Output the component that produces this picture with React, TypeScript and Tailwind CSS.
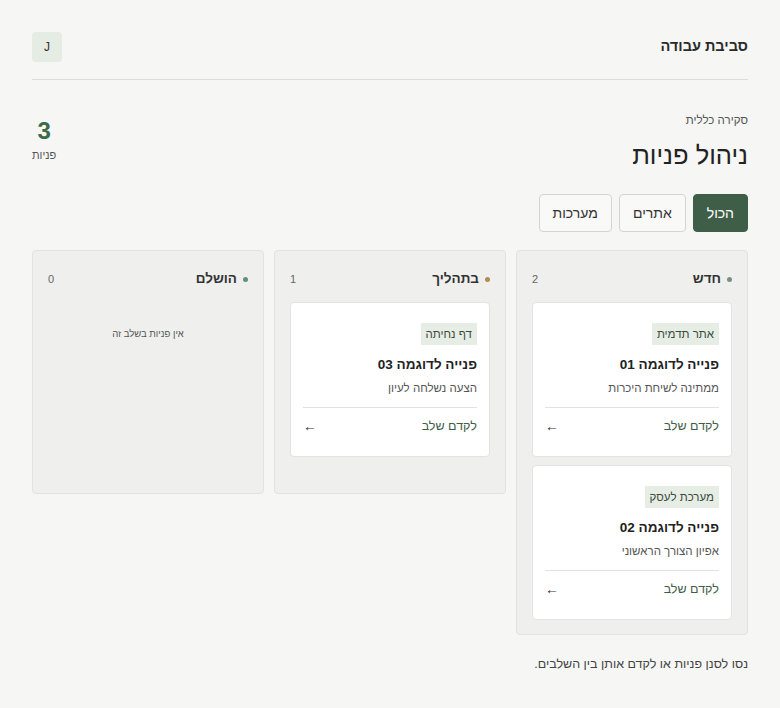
import React from 'react';

type Lead = { tag: string; title: string; note: string };
type Stage = { name: string; dot: string; leads: Lead[] };

const stages: Stage[] = [
  {
    name: 'חדש',
    dot: 'bg-[#7d8f81]',
    leads: [
      { tag: 'אתר תדמית', title: 'פנייה לדוגמה 01', note: 'ממתינה לשיחת היכרות' },
      { tag: 'מערכת לעסק', title: 'פנייה לדוגמה 02', note: 'אפיון הצורך הראשוני' },
    ],
  },
  {
    name: 'בתהליך',
    dot: 'bg-[#b38a52]',
    leads: [{ tag: 'דף נחיתה', title: 'פנייה לדוגמה 03', note: 'הצעה נשלחה לעיון' }],
  },
  { name: 'הושלם', dot: 'bg-[#5f9274]', leads: [] },
];

function LeadCard({ lead }: { lead: Lead }) {
  return (
    <div className="rounded-[4px] border border-[#e3e3df] bg-white px-[12px] pt-[20px] pb-[20px]">
      <div className="flex">
        <span className="h-[22px] bg-[#e6ede4] px-[5px] text-[11.5px] leading-[22px] text-[#3d4a40]">{lead.tag}</span>
      </div>
      <div className="mt-[10px] text-[13.5px] font-bold leading-[20px] text-[#222]">{lead.title}</div>
      <div className="mt-[4px] text-[11.5px] leading-[18px] text-[#555]">{lead.note}</div>
      <div className="mt-[10px] flex items-center justify-between border-t border-[#e2e2de] pt-[8px] text-[12.5px] leading-[20px]">
        <span className="text-[#3f5e48]">לקדם שלב</span>
        <span className="text-[14px] text-[#333]">←</span>
      </div>
    </div>
  );
}

export default function App() {
  return (
    <div
      dir="rtl"
      className="min-h-screen bg-[#f6f6f4] px-8 pt-8 pb-8 font-['Liberation_Sans','DejaVu_Sans',sans-serif] text-[#222]"
    >
      {/* Header */}
      <div className="flex items-center justify-between border-b border-[#dcdcd8] pb-[17px]">
        <h1 className="text-[14.5px] font-bold text-[#2a2a2a]">סביבת עבודה</h1>
        <div className="flex h-[30px] w-[30px] items-center justify-center rounded-[4px] bg-[#e5ece3] text-[12px] text-[#333]">
          J
        </div>
      </div>

      {/* Overview */}
      <div className="flex items-start justify-between pt-[32px]">
        <div>
          <div className="text-[11.5px] leading-[16px] text-[#555]">סקירה כללית</div>
          <h2 className="mt-[11px] text-[25.5px] leading-[32px] text-[#222]">ניהול פניות</h2>
        </div>
        <div className="mt-[5px] flex flex-col items-center">
          <div className="text-[24px] font-bold leading-[28px] text-[#3d6b4a]">3</div>
          <div className="mt-[3px] text-[11px] leading-[14px] text-[#555]">פניות</div>
        </div>
      </div>

      {/* Filters */}
      <div className="mt-[23px] flex gap-[7px]">
        <button className="h-[38px] rounded-[4px] border border-[#3f5e48] bg-[#3f5e48] px-[13px] text-[14px] text-white">הכול</button>
        <button className="h-[38px] rounded-[4px] border border-[#d4d4d0] bg-[#f9f9f7] px-[13px] text-[14px] text-[#333]">אתרים</button>
        <button className="h-[38px] rounded-[4px] border border-[#d4d4d0] bg-[#f9f9f7] px-[13px] text-[14px] text-[#333]">מערכות</button>
      </div>

      {/* Board */}
      <div className="mt-[18px] grid grid-cols-3 items-start gap-[10px]">
        {stages.map((s) => (
          <div key={s.name} className="min-h-[244px] rounded-[4px] border border-[#e2e2de] bg-[#efefed] px-[15px] pt-[18px] pb-[14px]">
            <div className="mb-[13px] flex h-[20px] items-center justify-between">
              <div className="flex items-center gap-[6px]">
                <span className={`h-[5px] w-[5px] rounded-full ${s.dot}`} />
                <span className="text-[13.5px] font-bold text-[#333]">{s.name}</span>
              </div>
              <span className="text-[11px] text-[#666]">{s.leads.length}</span>
            </div>
            {s.leads.length === 0 ? (
              <div className="mt-[38px] text-center text-[9.5px] leading-[14px] text-[#555]">אין פניות בשלב זה</div>
            ) : (
              <div className="flex flex-col gap-[8px]">
                {s.leads.map((l) => (
                  <LeadCard key={l.title} lead={l} />
                ))}
              </div>
            )}
          </div>
        ))}
      </div>

      <p className="mt-[20px] text-[12.5px] leading-[18px] text-[#444]">נסו לסנן פניות או לקדם אותן בין השלבים.</p>
    </div>
  );
}
